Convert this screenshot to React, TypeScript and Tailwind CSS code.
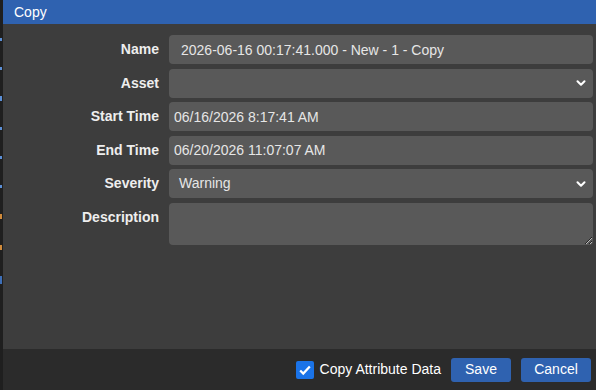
import { ChevronDown } from "lucide-react";

const font = { fontFamily: '"Liberation Sans", Arial, sans-serif' };

const Label = ({ children }: { children: React.ReactNode }) => (
  <div className="text-right text-[14px] font-bold leading-[29px] text-[#eeeeee]">
    {children}
  </div>
);

export default function App() {
  return (
    <div className="flex h-[390px] w-[596px] bg-[#1f1f1f]" style={font}>
      {/* background app peeking at the left edge */}
      <div className="flex w-[3px] flex-col gap-[26px] pt-[38px]">
        <div className="h-[3px] w-[2px] bg-[#5b8fd6]" />
        <div className="h-[3px] w-[2px] bg-[#5b8fd6]" />
        <div className="h-[5px] w-[2px] bg-[#5b8fd6]" />
        <div className="h-[3px] w-[2px] bg-[#5b8fd6]" />
        <div className="h-[3px] w-[2px] bg-[#5b8fd6]" />
        <div className="h-[3px] w-[2px] bg-[#5b8fd6]" />
        <div className="h-[5px] w-[2px] bg-[#d08a3a]" />
        <div className="h-[5px] w-[2px] bg-[#d08a3a]" />
        <div className="h-[8px] w-[2px] bg-[#3d6fb8]" />
      </div>

      <div className="flex flex-1 flex-col bg-[#3d3d3d]">
        <div className="flex h-[24px] items-center bg-[#2f62b0] pl-[11px] text-[14px] text-white">
          Copy
        </div>

        <div className="grid flex-1 grid-cols-[156px_1fr] content-start gap-x-[10px] gap-y-[4.5px] pr-[3px] pt-[11px] text-[14px]">
          <Label>Name</Label>
          <input
            readOnly
            value="2026-06-16 00:17:41.000 - New - 1 - Copy"
            className="h-[29px] rounded-[4px] bg-[#595959] px-[12px] text-[#e6e6e6] outline-none"
          />

          <Label>Asset</Label>
          <div className="flex h-[29px] items-center justify-end rounded-[4px] bg-[#595959] pr-[5px]">
            <ChevronDown className="h-[14px] w-[14px] text-white" strokeWidth={3.5} />
          </div>

          <Label>Start Time</Label>
          <input
            readOnly
            value="06/16/2026 8:17:41 AM"
            className="h-[29px] rounded-[4px] bg-[#595959] px-[5px] text-[#e6e6e6] outline-none"
          />

          <Label>End Time</Label>
          <input
            readOnly
            value="06/20/2026 11:07:07 AM"
            className="h-[29px] rounded-[4px] bg-[#595959] px-[5px] text-[#e6e6e6] outline-none"
          />

          <Label>Severity</Label>
          <div className="flex h-[29px] items-center justify-between rounded-[4px] bg-[#595959] pl-[10px] pr-[5px] text-[#e6e6e6]">
            <span>Warning</span>
            <ChevronDown className="h-[14px] w-[14px] text-white" strokeWidth={3.5} />
          </div>

          <Label>Description</Label>
          <textarea
            readOnly
            className="h-[42px] rounded-[4px] bg-[#595959] px-[5px] text-[#e6e6e6] outline-none"
          />
        </div>

        <div className="flex h-[41px] items-center justify-end gap-[10px] bg-[#2b2b2b] pr-[5px]">
          <label className="flex items-center gap-[6px] text-[14px] text-white">
            <span className="flex h-[18px] w-[18px] items-center justify-center rounded-[2px] bg-[#1a73e8]">
              <svg viewBox="0 0 16 16" className="h-[14px] w-[14px]" fill="none">
                <path d="M2.5 8.5l3.5 3.5 7.5-8" stroke="white" strokeWidth="2.6" />
              </svg>
            </span>
            Copy Attribute Data
          </label>
          <button className="h-[24px] w-[60px] rounded-[3px] bg-[#2f62b0] text-[14px] text-white">
            Save
          </button>
          <button className="h-[24px] w-[70px] rounded-[3px] bg-[#2f62b0] text-[14px] text-white">
            Cancel
          </button>
        </div>
      </div>
    </div>
  );
}
